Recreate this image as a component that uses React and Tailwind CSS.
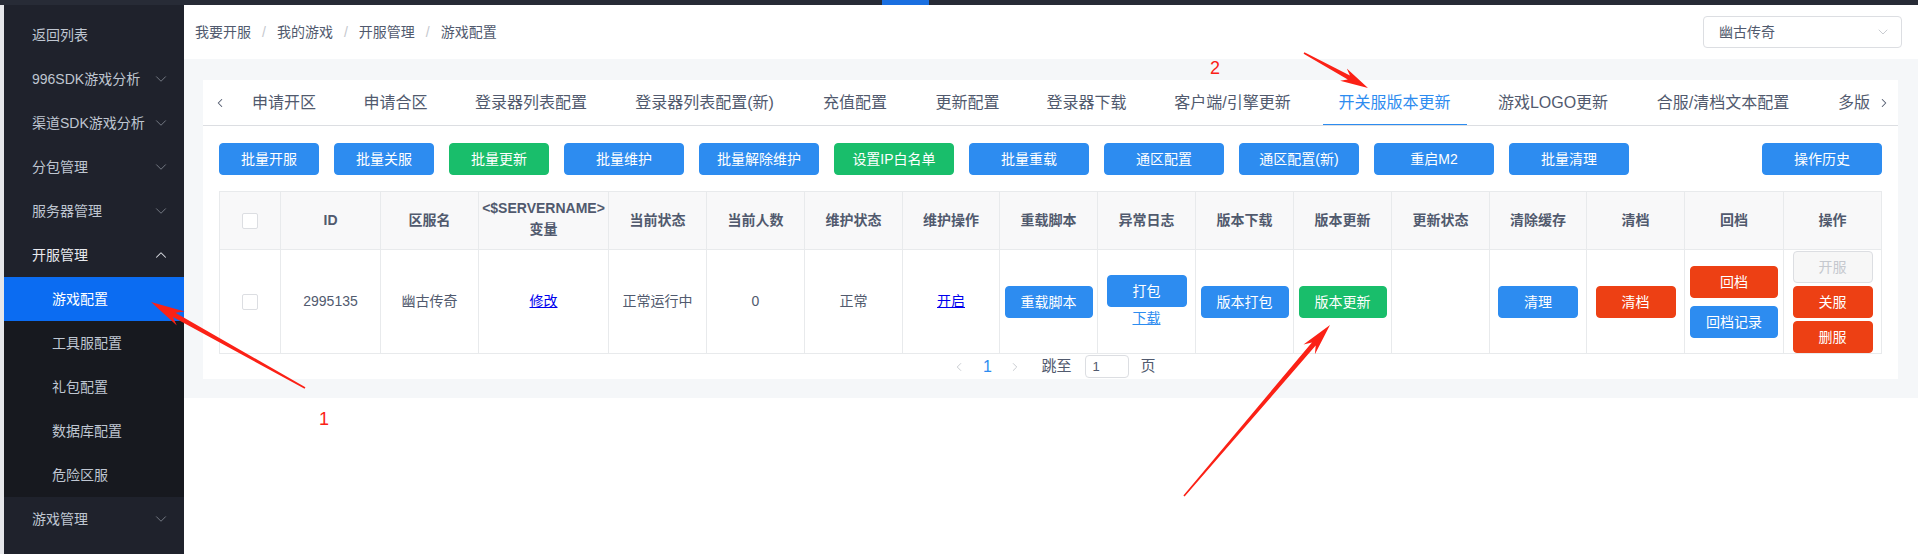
import { ChevronDown, ChevronUp, ChevronLeft, ChevronRight } from 'lucide-react'

const menu = [
  { label: '返回列表' },
  { label: '996SDK游戏分析', arrow: true },
  { label: '渠道SDK游戏分析', arrow: true },
  { label: '分包管理', arrow: true },
  { label: '服务器管理', arrow: true },
  { label: '开服管理', open: true },
]

const subMenu = ['游戏配置', '工具服配置', '礼包配置', '数据库配置', '危险区服']

const tabs = [
  ['申请开区', 112],
  ['申请合区', 111],
  ['登录器列表配置', 160],
  ['登录器列表配置(新)', 187],
  ['充值配置', 114],
  ['更新配置', 111],
  ['登录器下载', 127],
  ['客户端/引擎更新', 165],
  ['开关服版本更新', 159],
  ['游戏LOGO更新', 158],
  ['合服/清档文本配置', 182],
  ['多版', 58],
]

const toolbar = [
  ['批量开服', 'blue', 'w-[100px]'],
  ['批量关服', 'blue', 'w-[100px]'],
  ['批量更新', 'green', 'w-[100px]'],
  ['批量维护', 'blue', 'w-[120px]'],
  ['批量解除维护', 'blue', 'w-[120px]'],
  ['设置IP白名单', 'green', 'w-[120px]'],
  ['批量重载', 'blue', 'w-[120px]'],
  ['通区配置', 'blue', 'w-[120px]'],
  ['通区配置(新)', 'blue', 'w-[120px]'],
  ['重启M2', 'blue', 'w-[120px]'],
  ['批量清理', 'blue', 'w-[120px]'],
]

const cols = [61, 100, 98, 130, 98, 98, 98, 97, 98, 98, 98, 98, 98, 97, 98, 99, 98]

const heads = ['', 'ID', '区服名', 'SERVERNAME', '当前状态', '当前人数', '维护状态', '维护操作', '重载脚本', '异常日志', '版本下载', '版本更新', '更新状态', '清除缓存', '清档', '回档', '操作']

const colors = {
  blue: 'bg-[#2d8cf0] border-[#2d8cf0] text-white',
  green: 'bg-[#19be6b] border-[#19be6b] text-white',
  red: 'bg-[#ed4014] border-[#ed4014] text-white',
  disabled: 'bg-[#f7f7f7] border-[#dcdee2] text-[#c5c8ce]',
}

function Btn({ color = 'blue', className = 'min-w-[80px] px-[15px]', children }) {
  return (
    <button className={`h-[32px] rounded-[4px] border text-[14px] leading-[30px] whitespace-nowrap ${colors[color]} ${className}`}>
      {children}
    </button>
  )
}

function Checkbox() {
  return <span className="block w-[16px] h-[16px] rounded-[2px] border border-[#dcdee2] bg-white" />
}

// red annotation arrow: thin tail widening to a long narrow head
function arrowPts(x1, y1, x2, y2, head, headW, neck, tail) {
  const dx = x2 - x1
  const dy = y2 - y1
  const L = Math.hypot(dx, dy)
  const ux = dx / L
  const uy = dy / L
  const px = -uy
  const py = ux
  const bx = x2 - ux * head
  const by = y2 - uy * head
  const nx = x2 - ux * head * 0.78
  const ny = y2 - uy * head * 0.78
  const p = (x, y) => `${x.toFixed(1)},${y.toFixed(1)}`
  return [
    p(x1 + (px * tail) / 2, y1 + (py * tail) / 2),
    p(nx + (px * neck) / 2, ny + (py * neck) / 2),
    p(bx + (px * headW) / 2, by + (py * headW) / 2),
    p(x2, y2),
    p(bx - (px * headW) / 2, by - (py * headW) / 2),
    p(nx - (px * neck) / 2, ny - (py * neck) / 2),
    p(x1 - (px * tail) / 2, y1 - (py * tail) / 2),
  ].join(' ')
}

function Sidebar() {
  return (
    <aside className="w-[180px] shrink-0 bg-[#1f222c] pt-[8px] flex flex-col text-[14px] text-[#bfc6d1]">
      {menu.map((m) => (
        <div key={m.label} className={`h-[44px] flex items-center justify-between pl-[28px] pr-[14px] ${m.open ? 'text-[#e8eaef]' : ''}`}>
          <span>{m.label}</span>
          {m.arrow && <ChevronDown size={18} strokeWidth={1.2} className="text-[#7d828c]" />}
          {m.open && <ChevronUp size={18} strokeWidth={1.4} className="text-[#d6d9df]" />}
        </div>
      ))}
      <div className="bg-[#17191f]">
        {subMenu.map((s, i) => (
          <div key={s} className={`h-[44px] flex items-center pl-[48px] ${i === 0 ? 'bg-[#0b6cf2] text-white' : ''}`}>
            {s}
          </div>
        ))}
      </div>
      <div className="h-[44px] flex items-center justify-between pl-[28px] pr-[14px]">
        <span>游戏管理</span>
        <ChevronDown size={18} strokeWidth={1.2} className="text-[#7d828c]" />
      </div>
    </aside>
  )
}

function Header() {
  const crumbs = ['我要开服', '我的游戏', '开服管理', '游戏配置']
  return (
    <div className="h-[54px] bg-white flex items-center justify-between pl-[11px] pr-[16px]">
      <div className="flex items-center text-[14px] text-[#515a6e]">
        {crumbs.map((c, i) => (
          <span key={c} className="flex items-center">
            {i > 0 && <span className="mx-[11px] text-[#c5c8ce]">/</span>}
            {c}
          </span>
        ))}
      </div>
      <div className="w-[199px] h-[32px] rounded-[4px] border border-[#dcdee2] flex items-center justify-between pl-[15px] pr-[10px] text-[14px] text-[#515a6e]">
        <span>幽古传奇</span>
        <ChevronDown size={16} strokeWidth={1.4} className="text-[#c5c8ce]" />
      </div>
    </div>
  )
}

function Tabs() {
  return (
    <div className="h-[47px] flex border-b border-[#dcdee2]">
      <div className="w-[25px] flex items-center justify-end pr-[1px] text-[#515a6e]">
        <ChevronLeft size={14} strokeWidth={1.8} />
      </div>
      <div className="w-[1642px] overflow-hidden flex">
        {tabs.map(([t, w]) => {
          const active = t === '开关服版本更新'
          const last = t === '多版'
          return (
            <div
              key={t}
              style={{ width: w }}
              className={`relative shrink-0 flex items-center whitespace-nowrap text-[16px] ${active ? 'text-[#2d8cf0]' : 'text-[#515a6e]'} ${last ? 'justify-start pl-[24px]' : 'justify-center'}`}
            >
              {t}
              {active && <span className="absolute left-[8px] right-[7px] bottom-[-1px] h-[2px] bg-[#2d8cf0]" />}
            </div>
          )
        })}
      </div>
      <div className="w-[28px] flex items-center pl-[7px] text-[#515a6e]">
        <ChevronRight size={14} strokeWidth={1.8} />
      </div>
    </div>
  )
}

function Table() {
  const cell = 'border border-[#e8eaec] text-center align-middle p-0'
  return (
    <table className="table-fixed border-collapse w-[1662px] text-[14px] text-[#515a6e]">
      <colgroup>
        {cols.map((w, i) => (
          <col key={i} style={{ width: w }} />
        ))}
      </colgroup>
      <thead>
        <tr className="h-[58px] bg-[#f8f8f9]">
          {heads.map((h, i) => (
            <th key={i} className={`${cell} font-bold leading-[21px]`}>
              {i === 0 ? (
                <div className="flex justify-center">
                  <Checkbox />
                </div>
              ) : h === 'SERVERNAME' ? (
                <div className="flex flex-col items-center -mt-[3px]">
                  <span>{'<$SERVERNAME>'}</span>
                  <span>变量</span>
                </div>
              ) : (
                h
              )}
            </th>
          ))}
        </tr>
      </thead>
      <tbody>
        <tr className="h-[104px] bg-white">
          <td className={cell}>
            <div className="flex justify-center">
              <Checkbox />
            </div>
          </td>
          <td className={cell}>2995135</td>
          <td className={cell}>幽古传奇</td>
          <td className={cell}>
            <span className="text-[#0000ee] underline font-normal">修改</span>
          </td>
          <td className={cell}>正常运行中</td>
          <td className={cell}>0</td>
          <td className={cell}>正常</td>
          <td className={cell}>
            <span className="text-[#0000ee] underline font-normal">开启</span>
          </td>
          <td className={cell}>
            <Btn>重载脚本</Btn>
          </td>
          <td className={cell}>
            <div className="flex flex-col items-center">
              <Btn>打包</Btn>
              <span className="mt-[1px] text-[#2d8cf0] underline leading-[20px]">下载</span>
            </div>
          </td>
          <td className={cell}>
            <Btn>版本打包</Btn>
          </td>
          <td className={cell}>
            <Btn color="green">版本更新</Btn>
          </td>
          <td className={cell} />
          <td className={cell}>
            <Btn>清理</Btn>
          </td>
          <td className={cell}>
            <Btn color="red">清档</Btn>
          </td>
          <td className={cell}>
            <div className="flex flex-col items-center gap-[8px]">
              <Btn color="red" className="w-[88px]">回档</Btn>
              <Btn className="w-[88px]">回档记录</Btn>
            </div>
          </td>
          <td className={cell}>
            <div className="flex flex-col items-center gap-[3px]">
              <Btn color="disabled">开服</Btn>
              <Btn color="red">关服</Btn>
              <Btn color="red">删服</Btn>
            </div>
          </td>
        </tr>
      </tbody>
    </table>
  )
}

function Pagination() {
  return (
    <div className="h-[25px] flex items-center justify-center text-[15px] text-[#515a6e]">
      <span className="w-[28px] flex justify-center text-[#c5c8ce]">
        <ChevronLeft size={14} strokeWidth={1.6} />
      </span>
      <span className="w-[28px] text-center text-[16px] text-[#2d8cf0]">1</span>
      <span className="w-[28px] flex justify-center text-[#c5c8ce]">
        <ChevronRight size={14} strokeWidth={1.6} />
      </span>
      <span className="ml-[12px]">跳至</span>
      <span className="ml-[13px] w-[44px] h-[23px] rounded-[4px] border border-[#dcdee2] pl-[7px] text-[13px] leading-[21px]">1</span>
      <span className="ml-[12px]">页</span>
    </div>
  )
}

export default function App() {
  return (
    <div className="relative w-[1918px] h-[554px] overflow-hidden flex flex-col bg-white font-['Liberation_Sans','Noto_Sans_CJK_SC',sans-serif]">
      <div className="h-[5px] shrink-0 bg-[#272b36] flex">
        <div className="ml-[882px] w-[47px] bg-[#1a6fe0]" />
      </div>
      <div className="flex flex-1 min-h-0">
        <div className="w-[4px] shrink-0 bg-[#e6e7ea]" />
        <Sidebar />
        <main className="flex-1 flex flex-col">
          <Header />
          <section className="bg-[#f5f7f9] pl-[19px] pr-[20px] pt-[21px] pb-[19px]">
            <div className="bg-white h-[299px] flex flex-col">
              <Tabs />
              <div className="px-[16px] pt-[17px]">
                <div className="flex justify-between">
                  <div className="flex gap-[15px]">
                    {toolbar.map(([t, c, w]) => (
                      <Btn key={t} color={c} className={w}>
                        {t}
                      </Btn>
                    ))}
                  </div>
                  <Btn className="w-[120px]">操作历史</Btn>
                </div>
                <div className="mt-[16px]">
                  <Table />
                </div>
                <Pagination />
              </div>
            </div>
          </section>
        </main>
      </div>

      <svg className="absolute inset-0 pointer-events-none" width="1918" height="554">
        <polygon points={arrowPts(305, 388, 151, 302, 34, 16, 5, 1.5)} fill="#fb2116" />
        <polygon points={arrowPts(1304, 53, 1368, 88, 28, 14, 4.5, 1.5)} fill="#fb2116" />
        <polygon points={arrowPts(1184, 496, 1330, 325, 32, 15, 5, 1.5)} fill="#fb2116" />
        <text x="319" y="425" fill="#fb2116" fontSize="18" fontFamily="Liberation Sans, sans-serif">1</text>
        <text x="1210" y="74" fill="#fb2116" fontSize="18" fontFamily="Liberation Sans, sans-serif">2</text>
      </svg>
    </div>
  )
}
